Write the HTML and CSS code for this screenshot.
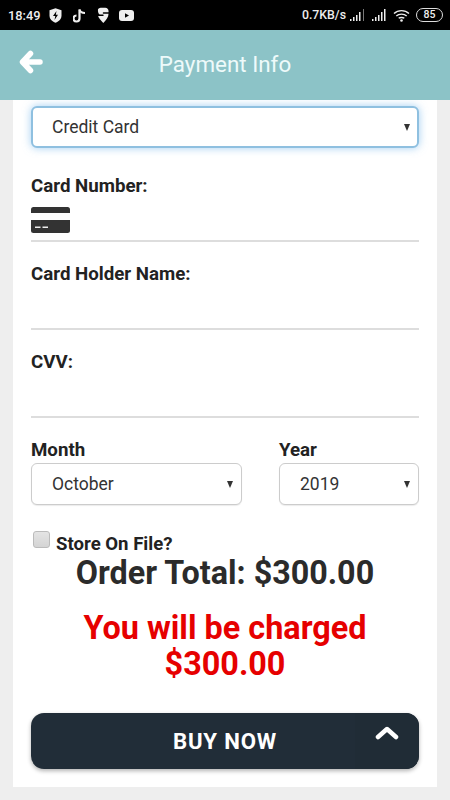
FILE: index.html
```html
<!DOCTYPE html>
<html>
<head>
	<meta charset="utf-8"/>
	<title>Payment Info</title>
	<link rel="stylesheet" href="styles.css">
</head>
<body>
	<div class="statusbar">
		<div class="status-left">
			<span class="clock">18:49</span>
			<svg class="st-shield" width="13" height="15" viewBox="0 0 13 15"><path d="M6.500 .3 12.500 2.300V7.500C12.500 11 10 13.500 6.500 14.800 3 13.500 .5 11 .5 7.500V2.300Z" fill="#eee"/><path d="M7.500 3 4 8H6.300L5.500 12 9 6.800H6.800Z" fill="#000"/></svg>
			<svg class="st-note" width="13" height="15" viewBox="0 0 13 15"><path d="M6.500 1.500V10.500A3 3 0 1 1 3.500 7.500" fill="none" stroke="#eee" stroke-width="2.200"/><path d="M6.500 1.500C7 3.500 9 5 12 5" fill="none" stroke="#eee" stroke-width="2"/></svg>
			<svg class="st-drop" width="12" height="17" viewBox="0 0 13 17"><path d="M1 2.500C1 1 2.500 0 4 0H9C11 0 12.500 1.500 12.500 3.500V5H7C6 5 6 6.500 7 6.500H12.500C12.500 10 10 13.500 6.800 16.500 4 13.500 2 11.500 1.200 9H6.500C7.500 9 7.500 7.500 6.500 7.500H3C1.800 7 1 5 1 2.500Z" fill="#eee"/></svg>
			<svg width="15" height="11" viewBox="0 0 15 11"><rect width="15" height="11" rx="3" fill="#eee"/><path d="M6 3.200 10 5.500 6 7.800Z" fill="#000"/></svg>
		</div>
		<div class="status-right">
			<span class="speed">0.7KB/s</span>
			<svg class="sig-first" width="16" height="12" viewBox="0 0 16 12"><path d="M1 10h1.500v2H1zM4 8h1.500v4H4zM7 6h1.500v6H7zM10 3h1.500v9H10z" fill="#eee"/><path d="M14 0h1v12h-1z" fill="#777"/></svg>
			<svg width="16" height="12" viewBox="0 0 16 12"><path d="M1 10h1.500v2H1zM4 8h1.500v4H4zM7 6h1.500v6H7zM10 3h1.500v9H10zM13 0h1.500v12H13z" fill="#eee"/></svg>
			<svg width="17" height="13" viewBox="0 0 17 13"><path d="M1 4.500C5 .7 12 .7 16 4.500M3.300 7C6 4.500 11 4.500 13.700 7M5.700 9.300C7 8.200 10 8.200 11.300 9.300" fill="none" stroke="#eee" stroke-width="1.400"/><circle cx="8.500" cy="11.500" r="1.300" fill="#eee"/></svg>
			<span class="battery">85</span>
		</div>
	</div>
	<div class="header">
		<svg class="back" width="24" height="24" viewBox="0 0 24 24"><path d="M11.500 3.500 3.500 12 11.500 20.500M5 12H21" fill="none" stroke="#fff" stroke-width="5.500" stroke-linecap="round" stroke-linejoin="round"/></svg>
		<span class="header-title">Payment Info</span>
	</div>
	<div class="card">
		<div class="select focused"><span>Credit Card</span><i class="caret"></i></div>

		<div class="label first">Card Number:</div>
		<div class="field">
			<svg class="cc" width="39" height="26" viewBox="0 0 39 26"><path d="M0 6V2.500Q0 0 2.500 0H36.500Q39 0 39 2.500V6Z" fill="#333"/><path d="M0 13H39V23.500Q39 26 36.500 26H2.500Q0 26 0 23.500Z" fill="#333"/><path d="M4 19.500H9.500V21H4ZM11.500 19.500H17V21H11.500Z" fill="#eee"/></svg>
		</div>
		<div class="label">Card Holder Name:</div>
		<div class="field"></div>
		<div class="label">CVV:</div>
		<div class="field"></div>

		<div class="date-row">
			<div class="month">
				<div class="label small">Month</div>
				<div class="select"><span>October</span><i class="caret"></i></div>
			</div>
			<div class="year">
				<div class="label small">Year</div>
				<div class="select"><span>2019</span><i class="caret"></i></div>
			</div>
		</div>

		<div class="store">
			<span class="checkbox"></span>
			<span class="store-text">Store On File?</span>
		</div>
		<div class="total">Order Total: $300.00</div>
		<div class="charged">You will be charged<br>$300.00</div>

		<div class="buy">
			<span class="buy-text">BUY NOW</span>
			<span class="buy-toggle">
				<svg width="24" height="16" viewBox="0 0 24 16"><path d="M3 13 12 5 21 13" fill="none" stroke="#fff" stroke-width="4.500" stroke-linecap="round" stroke-linejoin="round"/></svg>
			</span>
		</div>
	</div>
</body>
</html>
```

FILE: styles.css
```css
body {
	margin: 0;
	width: 450px;
	height: 800px;
	overflow: hidden;
	background-color: #eee;
	font-family: Roboto, "Liberation Sans", sans-serif;
	color: #222;
}
.statusbar {
	height: 30px;
	background-color: #000;
	color: #eee;
	display: flex;
	align-items: center;
	justify-content: space-between;
	padding: 0 7px 0 8px;
	box-sizing: border-box;
	font-size: 12.800px;
	font-weight: 500;
}
.status-left, .status-right {
	display: flex;
	align-items: center;
}
.clock {
	margin-right: 9px;
}
.st-shield {
	margin-right: 11px;
}
.st-note {
	margin-right: 11px;
}
.st-drop {
	margin-right: 10px;
}
.status-right {
	gap: 6px;
}
.speed {
	font-size: 12.300px;
}
.sig-first {
	margin-left: -3px;
}
.battery {
	width: 25px;
	height: 12px;
	border: 1px solid #ddd;
	border-radius: 7px;
	font-size: 10.500px;
	line-height: 12px;
	text-align: center;
}
.header {
	height: 70px;
	background-color: #8cc3c7;
	display: flex;
	align-items: center;
	justify-content: center;
	position: relative;
}
.back {
	position: absolute;
	left: 19px;
	top: 20px;
}
.header-title {
	color: #eefafa;
	font-size: 22.400px;
	margin-top: -2px;
}
.card {
	margin: 0 13px;
	height: 687px;
	background-color: #fff;
	padding: 6px 18px 0;
	box-sizing: border-box;
}
.select {
	height: 42px;
	box-sizing: border-box;
	border: 1px solid #ccc;
	border-radius: 6px;
	padding: 0 8px 0 20px;
	display: flex;
	align-items: center;
	justify-content: space-between;
	font-size: 17.500px;
	color: #333;
	background-color: #fff;
	box-shadow: 0 1px 1px rgba(0, 0, 0, 0.08);
}
.select.focused {
	border: 2px solid #8fc0e0;
	padding: 0 7px 0 19px;
	box-shadow: 0 0 9px rgba(102, 175, 233, 0.6);
}
.caret {
	width: 0;
	height: 0;
	border-left: 3.500px solid transparent;
	border-right: 3.500px solid transparent;
	border-top: 7px solid #333;
}
.label {
	font-size: 18.700px;
	font-weight: 700;
	line-height: 21px;
	padding-top: 22px;
	color: #222;
}
.label.first {
	padding-top: 28px;
}
.label.small {
	padding-top: 1px;
}
.field {
	height: 43px;
	border-bottom: 2px solid #ddd;
}
.cc {
	display: block;
	padding-top: 10px;
}
.date-row {
	display: flex;
	justify-content: space-between;
	margin-top: 21px;
}
.date-row .label {
	margin-bottom: 2px;
}
.month {
	width: 211px;
}
.year {
	width: 140px;
}
.store {
	display: flex;
	align-items: flex-start;
	margin-top: 26px;
	padding-left: 2px;
	height: 25px;
}
.checkbox {
	width: 17px;
	height: 17px;
	box-sizing: border-box;
	border: 1px solid #bbb;
	border-radius: 3px;
	background: linear-gradient(#e4e4e4, #d4d4d4);
	margin-right: 6px;
}
.store-text {
	font-size: 18.600px;
	font-weight: 700;
	line-height: 26px;
}
.total {
	text-align: center;
	font-size: 32.300px;
	font-weight: 700;
	line-height: 38px;
	margin-top: -2px;
	color: #2b2b2b;
}
.charged {
	text-align: center;
	font-size: 32.400px;
	font-weight: 700;
	line-height: 36px;
	color: #e60000;
	margin-top: 18px;
}
.buy {
	height: 56px;
	margin-top: 31px;
	border-radius: 13px;
	background-color: #212d38;
	box-shadow: 0 2px 4px rgba(0, 0, 0, 0.3);
	color: #fff;
	display: flex;
	align-items: center;
	justify-content: center;
	position: relative;
}
.buy-text {
	font-size: 22.200px;
	font-weight: 700;
	letter-spacing: 0.8px;
}
.buy-toggle {
	position: absolute;
	top: 0;
	right: 0;
	bottom: 0;
	width: 64px;
	border-radius: 0 13px 13px 0;
	background-color: #202c36;
	display: flex;
	justify-content: center;
	padding-top: 11px;
	box-sizing: border-box;
}
```
